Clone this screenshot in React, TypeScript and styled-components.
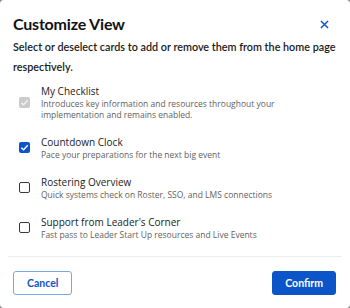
import styled, { createGlobalStyle } from 'styled-components';

const GlobalStyle = createGlobalStyle`
  html, body {
    margin: 0;
    padding: 0;
    background: #8a8a8a;
  }
  * {
    box-sizing: border-box;
  }
`;

const Dialog = styled.div`
  width: 350px;
  height: 308px;
  background: #fff;
  border-radius: 4px;
  display: flex;
  flex-direction: column;
  font-family: 'Lato', 'Liberation Sans', sans-serif;
  color: #1a1a1a;
`;

const Header = styled.div`
  padding: 14px 13px 0 13px;
`;

const TitleRow = styled.div`
  display: flex;
  align-items: center;
  justify-content: space-between;
`;

const Title = styled.h2`
  margin: 0;
  font-size: 16px;
  line-height: 20px;
  font-weight: 700;
  letter-spacing: -0.2px;
  color: #111;
`;

const CloseButton = styled.button`
  width: 9px;
  height: 20px;
  padding: 0;
  margin-right: 8px;
  border: none;
  background: none;
  display: flex;
  align-items: center;
  justify-content: center;
  cursor: pointer;
  color: #0b55c9;
`;

const Subtitle = styled.p`
  margin: 3px 0 0;
  font-size: 10.8px;
  line-height: 20px;
  font-weight: 600;
  color: #1a1a1a;
`;

const List = styled.div`
  display: flex;
  flex-direction: column;
  gap: 15px;
  padding: 7px 13px 0 19px;
  flex: 1;
`;

const Item = styled.label`
  display: flex;
  align-items: center;
  gap: 11px;
  font-family: 'Open Sans', 'Noto Sans', sans-serif;
`;

const Box = styled.span<{ $state: 'on' | 'off' | 'disabled' }>`
  flex: none;
  width: 11px;
  height: 11px;
  border-radius: 2px;
  display: flex;
  align-items: center;
  justify-content: center;
  background: ${p => (p.$state === 'on' ? '#0b55c9' : p.$state === 'disabled' ? '#cbcbcb' : '#fff')};
  border: ${p => (p.$state === 'off' ? '1.5px solid #3a3a3a' : 'none')};
`;

const ItemText = styled.div`
  display: flex;
  flex-direction: column;
`;

const ItemTitle = styled.div`
  font-size: 10px;
  line-height: 14px;
  color: #222;
`;

const ItemDesc = styled.div`
  font-size: 8.5px;
  line-height: 11px;
  color: #5f5f5f;
  max-width: 240px;
`;

const Footer = styled.div`
  margin: 0 8px;
  border-top: 1px solid #ececec;
  padding: 14px 6px 13px 5px;
  display: flex;
  justify-content: space-between;
`;

const Button = styled.button<{ $primary?: boolean }>`
  height: 24px;
  padding: 0 ${p => (p.$primary ? '12px' : '13px')};
  border-radius: 3px;
  font-family: 'Lato', 'Liberation Sans', sans-serif;
  font-size: 10.5px;
  font-weight: 700;
  cursor: pointer;
  color: ${p => (p.$primary ? '#fff' : '#0b55c9')};
  background: ${p => (p.$primary ? '#0b55c9' : '#fff')};
  border: 1px solid ${p => (p.$primary ? '#0b55c9' : '#7aa6e6')};
`;

const Check = ({ color }: { color: string }) => (
  <svg width="9" height="9" viewBox="0 0 10 10">
    <path d="M1.5 5.2 L4 7.6 L8.6 2.6" fill="none" stroke={color} strokeWidth="1.6" />
  </svg>
);

const items: { title: string; desc: string; state: 'on' | 'off' | 'disabled' }[] = [
  {
    title: 'My Checklist',
    desc: 'Introduces key information and resources throughout your implementation and remains enabled.',
    state: 'disabled',
  },
  { title: 'Countdown Clock', desc: 'Pace your preparations for the next big event', state: 'on' },
  { title: 'Rostering Overview', desc: 'Quick systems check on Roster, SSO, and LMS connections', state: 'off' },
  { title: "Support from Leader's Corner", desc: 'Fast pass to Leader Start Up resources and Live Events', state: 'off' },
];

export default function App() {
  return (
    <>
      <GlobalStyle />
      <Dialog>
        <Header>
          <TitleRow>
            <Title>Customize View</Title>
            <CloseButton aria-label="Close">
              <svg width="9" height="9" viewBox="0 0 10 10">
                <path d="M1 1 L9 9 M9 1 L1 9" stroke="currentColor" strokeWidth="1.6" />
              </svg>
            </CloseButton>
          </TitleRow>
          <Subtitle>Select or deselect cards to add or remove them from the home page respectively.</Subtitle>
        </Header>
        <List>
          {items.map(item => (
            <Item key={item.title}>
              <Box $state={item.state}>
                {item.state === 'on' && <Check color="#fff" />}
                {item.state === 'disabled' && <Check color="#f2f2f2" />}
              </Box>
              <ItemText>
                <ItemTitle>{item.title}</ItemTitle>
                <ItemDesc>{item.desc}</ItemDesc>
              </ItemText>
            </Item>
          ))}
        </List>
        <Footer>
          <Button>Cancel</Button>
          <Button $primary>Confirm</Button>
        </Footer>
      </Dialog>
    </>
  );
}
